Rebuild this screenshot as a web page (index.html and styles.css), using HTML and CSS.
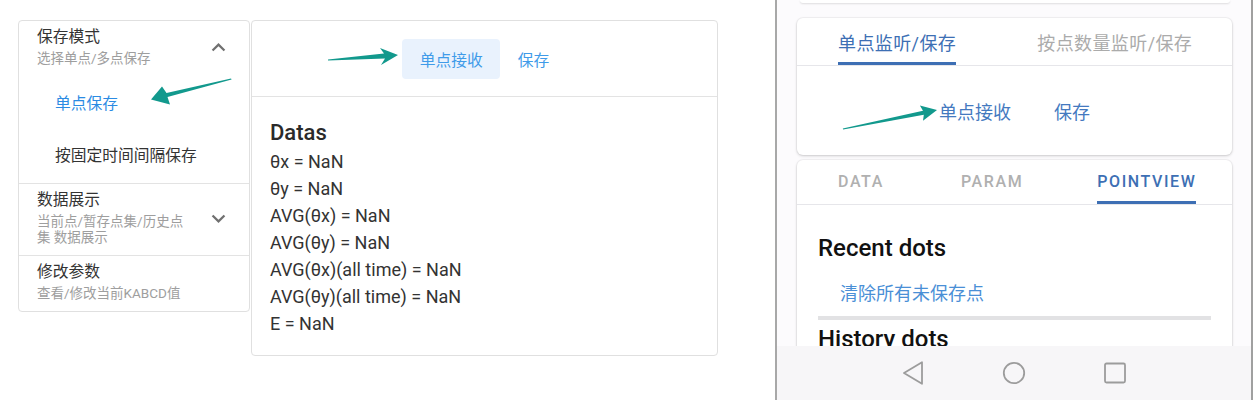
FILE: index.html
```html
<!DOCTYPE html>
<html lang="zh-CN">
<head>
<meta charset="utf-8">
<title>Save mode</title>
<link rel="stylesheet" href="styles.css">
</head>
<body>
<div class="desk">
  <div class="panels">
    <section class="panel">
      <header class="ph">
        <div class="ph-text">
          <div class="ph-title">保存模式</div>
          <div class="ph-sub">选择单点/多点保存</div>
        </div>
        <svg class="chev" viewBox="0 0 24 24"><path d="M7.41 15.41L12 10.83l4.59 4.58L18 14l-6-6-6 6z"/></svg>
      </header>
      <div class="opts">
        <div class="opt active">单点保存</div>
        <div class="opt">按固定时间间隔保存</div>
      </div>
    </section>
    <section class="panel">
      <header class="ph">
        <div class="ph-text">
          <div class="ph-title">数据展示</div>
          <div class="ph-sub">当前点/暂存点集/历史点集 数据展示</div>
        </div>
        <svg class="chev" viewBox="0 0 24 24"><path d="M7.41 8.59L12 13.17l4.59-4.58L18 10l-6 6-6-6z"/></svg>
      </header>
    </section>
    <section class="panel">
      <header class="ph">
        <div class="ph-text">
          <div class="ph-title">修改参数</div>
          <div class="ph-sub">查看/修改当前KABCD值</div>
        </div>
      </header>
    </section>
    <svg class="arrow a1" viewBox="145 75 95 35"><polygon points="231,78.5 166.5,92.9 162,86.5 151,99.5 170,104.5 167.5,97.1 231.6,79.6"/></svg>
  </div>

  <div class="card-mid">
    <div class="mid-head">
      <button class="btn btn-on">单点接收</button>
      <button class="btn">保存</button>
      <svg class="arrow a2" viewBox="320 44 85 25"><polygon points="328,59.4 384,53.6 380,48 398,55 381,65 385,58.6 328,60.6"/></svg>
    </div>
    <div class="mid-body">
      <div class="datas-title">Datas</div>
      <div class="line">θx = NaN</div>
      <div class="line">θy = NaN</div>
      <div class="line">AVG(θx) = NaN</div>
      <div class="line">AVG(θy) = NaN</div>
      <div class="line">AVG(θx)(all time) = NaN</div>
      <div class="line">AVG(θy)(all time) = NaN</div>
      <div class="line">E = NaN</div>
    </div>
  </div>
</div>

<div class="phone">
  <div class="screen">
    <div class="stub"></div>
    <div class="pcard pcard-top">
      <div class="tabs-cn">
        <div class="tab-cn"><span class="lbl on">单点监听/保存</span></div>
        <div class="tab-cn"><span class="lbl">按点数量监听/保存</span></div>
      </div>
      <div class="pc-body">
        <span class="pbtn">单点接收</span>
        <span class="pbtn">保存</span>
        <svg class="arrow a3" viewBox="838 100 104 34"><polygon points="842.8,128.5 923,110.8 919.9,105.6 937,110 923,120.8 923.8,114.8 843.2,129.6"/></svg>
      </div>
    </div>
    <div class="pcard pcard-main">
      <div class="tabs-en">
        <div class="tab-en t-data"><span class="lbl">DATA</span></div>
        <div class="tab-en t-param"><span class="lbl">PARAM</span></div>
        <div class="tab-en t-pv"><span class="lbl on">POINTVIEW</span></div>
      </div>
      <div class="pv">
        <div class="pv-h">Recent dots</div>
        <div class="pv-clear">清除所有未保存点</div>
        <div class="pv-bar"></div>
        <div class="pv-h pv-h2">History dots</div>
      </div>
    </div>
  </div>
  <nav class="navbar">
    <div class="nav-slot">
      <svg viewBox="0 0 24 24" class="nav-ic"><polygon points="3,12 21,1.2 21,22.8"/></svg>
    </div>
    <div class="nav-slot">
      <svg viewBox="0 0 24 24" class="nav-ic"><circle cx="12" cy="12" r="10.2"/></svg>
    </div>
    <div class="nav-slot">
      <svg viewBox="0 0 24 24" class="nav-ic"><rect x="2" y="2.5" width="20" height="19" rx="1.5"/></svg>
    </div>
  </nav>
</div>
</body>
</html>
```

FILE: styles.css
```css
* { box-sizing: border-box; }

html, body {
  margin: 0;
  padding: 0;
  background: #ffffff;
}

body {
  width: 1254px;
  height: 407px;
  overflow: hidden;
  display: flex;
  align-items: flex-start;
  font-family: Roboto, "Noto Sans CJK SC", sans-serif;
  color: rgba(0, 0, 0, 0.87);
}

/* ---------- left desktop area ---------- */
.desk {
  width: 775px;
  flex: none;
  display: flex;
  align-items: flex-start;
  padding: 20px 0 0 18px;
}

.panels {
  position: relative;
  width: 232px;
  border: 1px solid #e0e0e0;
  border-radius: 4px;
  background: #fff;
}

.panel + .panel {
  border-top: 1px solid #e3e3e3;
}

.ph {
  display: flex;
  align-items: center;
  padding: 7px 17px 10px 18px;
}

.ph-text {
  flex: 1;
}

.ph-title {
  font-size: 15.75px;
  line-height: 18px;
  color: #333;
}

.ph-sub {
  width: 152px;
  margin-top: 4px;
  font-size: 13.5px;
  line-height: 16px;
  color: #9e9e9e;
}

.chev {
  width: 27px;
  height: 27px;
  flex: none;
  fill: #707070;
}

.opts {
  padding: 0 0 3px;
}

.opt {
  height: 52px;
  display: flex;
  align-items: center;
  padding-left: 36px;
  font-size: 15.75px;
  color: #333;
}

.opt.active {
  color: #2b8be3;
}

.arrow {
  position: absolute;
  fill: #12998d;
}

.a1 {
  left: 126px;
  top: 54px;
  width: 95px;
  height: 35px;
}

/* ---------- middle card ---------- */
.card-mid {
  margin-left: 1px;
  width: 467px;
  height: 336px;
  border: 1px solid #e0e0e0;
  border-radius: 4px;
  background: #fff;
}

.mid-head {
  position: relative;
  display: flex;
  justify-content: center;
  padding: 18px 0 17px;
  border-bottom: 1px solid #e3e3e3;
}

.btn {
  height: 40px;
  padding: 0 17.5px;
  border: none;
  border-radius: 4px;
  background: transparent;
  font-family: Roboto, "Noto Sans CJK SC", sans-serif;
  font-size: 15.75px;
  color: #3f9be9;
}

.btn-on {
  background: #e9f2fd;
}

.a2 {
  left: 68px;
  top: 23px;
  width: 85px;
  height: 25px;
}

.mid-body {
  padding: 21px 18px 0;
}

.datas-title {
  font-size: 22px;
  line-height: 30px;
  font-weight: 500;
  color: #2a2a2a;
}

.line {
  font-size: 18px;
  line-height: 27px;
  color: #333;
}

/* ---------- phone ---------- */
.phone {
  width: 478px;
  height: 400px;
  flex: none;
  border-left: 2px solid #a8a8a8;
  border-right: 2px solid #a0a0a0;
  display: flex;
  flex-direction: column;
}

.screen {
  height: 346px;
  overflow: hidden;
  background: #fcfbfd;
}

.stub {
  height: 3px;
  margin: 0 21px 0 23px;
  background: #fff;
  border-radius: 0 0 4px 4px;
  box-shadow: 0 1px 2px rgba(0, 0, 0, 0.12);
}

.pcard {
  margin: 15px 19px 0 20px;
  background: #fff;
  border-radius: 6px;
  box-shadow: 0 1px 3px rgba(0, 0, 0, 0.18), 0 0 0 1px rgba(0, 0, 0, 0.03);
}

.pcard-top {
  height: 137px;
}

.pcard-main {
  margin-top: 5px;
  height: 320px;
  border-radius: 6px 6px 0 0;
}

.tabs-cn {
  display: flex;
  height: 48px;
  border-bottom: 1px solid #e6e6ea;
}

.tab-cn {
  flex: none;
  padding: 0 40px 0 41px;
  display: flex;
}

.lbl {
  display: flex;
  align-items: center;
  white-space: nowrap;
  border-bottom: 3px solid transparent;
  color: #ababab;
}

.tab-cn .lbl {
  padding-top: 4px;
  font-size: 18px;
  letter-spacing: 0.4px;
}

.lbl.on {
  color: #3d6fb4;
  border-bottom-color: #3d6fb4;
}

.pc-body {
  position: relative;
  height: 89px;
  display: flex;
  align-items: center;
  justify-content: center;
}

.pbtn {
  padding: 0 21.5px;
  font-size: 18px;
  color: #4479bf;
}

.a3 {
  left: 41px;
  top: 34px;
  width: 104px;
  height: 34px;
}

.tabs-en {
  display: flex;
  height: 45px;
  border-bottom: 1px solid #e6e6ea;
}

.tab-en {
  flex: none;
  display: flex;
}

.t-data {
  padding: 0 39px 0 41px;
}

.t-param {
  padding: 0 38px 0 38px;
}

.t-pv {
  padding: 0 36px 0 36px;
}

.tab-en .lbl {
  padding-top: 1px;
  font-size: 16px;
  font-weight: 500;
  letter-spacing: 0.1em;
  color: #b0b0b0;
}

.tab-en .lbl.on {
  color: #3d6fb4;
}

.pv {
  padding: 27px 21px 0;
}

.pv-h {
  font-size: 24px;
  line-height: 32px;
  font-weight: 500;
  color: #111;
}

.pv-clear {
  margin-top: 10px;
  height: 36px;
  display: flex;
  align-items: center;
  padding-left: 22px;
  font-size: 18px;
  color: #4a8fd6;
}

.pv-bar {
  margin-top: 6px;
  height: 4px;
  background: #e2e2e4;
}

.pv-h2 {
  margin-top: 3px;
}

.navbar {
  height: 54px;
  background: #f7f6f8;
  display: flex;
  justify-content: center;
}

.nav-slot {
  width: 101px;
  display: flex;
  align-items: center;
  justify-content: center;
}

.nav-ic {
  width: 24px;
  height: 24px;
  fill: none;
  stroke: #9c9c9c;
  stroke-width: 1.8;
  stroke-linejoin: round;
}
```
